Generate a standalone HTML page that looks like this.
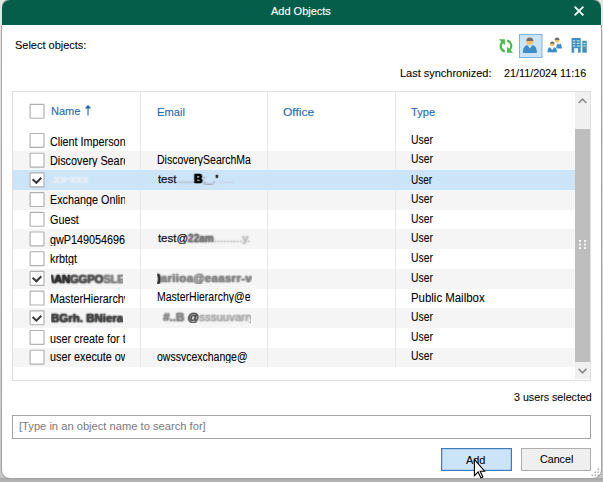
<!DOCTYPE html>
<html><head><meta charset="utf-8"><style>
*{margin:0;padding:0;box-sizing:border-box}
html,body{width:603px;height:482px;overflow:hidden;background:#ffffff;font-family:"Liberation Sans",sans-serif;font-size:12px;color:#000000}
.t,.clip{-webkit-text-stroke:0.08px currentColor}
.abs{position:absolute}
.t{position:absolute;white-space:nowrap;line-height:12px}
.sx{display:inline-block;transform-origin:0 0}
.clip{position:absolute;overflow:hidden;white-space:nowrap;line-height:12px}
.cb{position:absolute;width:15px;height:15px;border:1px solid #ababab;border-radius:1px;background:#fff}
.row{position:absolute;left:13px;width:562px}
.g{background:#f5f5f5}
.sel{background:#cce4f7}
.vsep{position:absolute;top:92px;width:1px;height:275px;background:#e6e6e6}
.bl{display:inline-block;color:transparent !important;-webkit-text-stroke:0 !important;text-shadow:0 0 var(--r,1.6px) var(--c,#000),0 0 var(--r,1.6px) var(--c,#000),0 0 var(--r,1.6px) var(--c,#000)}
body.measure .nm{visibility:hidden}
body.measure .t, body.measure .clip{color:#000 !important}
</style></head><body>
<div class="abs nm" style="left:0;top:0;width:603px;height:482px;background:linear-gradient(#e8e8e8,#c6c6c6)"></div>
<div class="abs nm" style="left:0;top:478px;width:603px;height:4px;background:linear-gradient(#a6a6a6,#b6b6b6)"></div>
<div class="abs nm" style="left:2px;top:0;width:599px;height:478px;background:#fff;border-radius:8px 8px 8px 8px;overflow:hidden;box-shadow:0 0 0 1px #a4a4a4,0 1px 0 0 #9a9a9a"><div class="abs" style="left:0;top:0;width:599px;height:25px;background:#045e4a"></div></div>
<div class="abs nm" style="left:0;top:0;width:2px;height:25px;background:#e6e6e6"></div>
<div class="abs nm" style="left:601px;top:0;width:2px;height:25px;background:#e6e6e6"></div>
<svg class="abs nm" style="left:572px;top:4px" width="14" height="14" viewBox="0 0 14 14"><path d="M2.6 2.6L11.4 11.4M11.4 2.6L2.6 11.4" stroke="#f4fffc" stroke-width="1.9"/></svg>
<svg class="abs nm" style="left:496px;top:36px" width="20" height="20" viewBox="0 0 20 20">
  <g fill="none" stroke="#4cb749" stroke-width="2.1">
  <path d="M6.2 6.2 A5.8 5.8 0 0 0 8.8 15.6"/>
  <path d="M13.8 13.8 A5.8 5.8 0 0 0 11.2 4.4"/>
  </g>
  <g fill="#4cb749">
  <path d="M2.9 3.2 L8.9 3.2 L8.9 9.2 Z"/>
  <path d="M17.1 16.8 L11.1 16.8 L11.1 10.8 Z"/>
  </g>
</svg>
<svg class="abs nm" style="left:518px;top:33px" width="25" height="25" viewBox="0 0 25 25">
  <rect x="1.5" y="1.5" width="22.5" height="23" fill="#cce4f7" stroke="#7fb2e5" stroke-width="1"/>
  <path d="M4.9 20 C4.9 14 7 12.2 9.5 12.2 L11.9 15.5 L14.3 12.2 C16.8 12.2 18.9 14 18.9 20 Z" fill="#3d8ec4"/>
  <circle cx="11.8" cy="8.2" r="3.5" fill="#f3c064"/>
  <path d="M8.3 7.9 A3.5 3.5 0 0 1 15.3 7.9 Z" fill="#6f6f6f"/>
</svg>
<svg class="abs nm" style="left:543px;top:33px" width="25" height="25" viewBox="0 0 25 25">
  <path d="M13.2 15.6 C13.2 12 14.5 10.6 15.2 10.6 L16 12 L16.9 10.6 C17.6 10.6 18.9 12 18.9 15.6 Z" fill="#3d8ec4"/>
  <circle cx="14.1" cy="7.3" r="2.4" fill="#f3c064"/>
  <path d="M11.7 7 A2.4 2.4 0 0 1 16.5 7 Z" fill="#6f6f6f"/>
  <path d="M4.1 19.7 C4.1 15.5 5.5 14 7.3 14 L9.2 16.5 L11.1 14 C12.9 14 14.3 15.5 14.3 19.7 Z" fill="#3d8ec4" stroke="#fff" stroke-width="0.7"/>
  <circle cx="9.3" cy="11" r="2.3" fill="#f3c064"/>
  <path d="M7 10.7 A2.3 2.3 0 0 1 11.6 10.7 Z" fill="#6f6f6f"/>
</svg>
<svg class="abs nm" style="left:568px;top:33px" width="25" height="25" viewBox="0 0 25 25">
  <path d="M3.6 4.9 H12.7 V19.7 H10.1 V15.3 H6.2 V19.7 H3.6 Z" fill="#3d8ec4"/>
  <rect x="14.3" y="7.8" width="4.4" height="11.9" fill="#3d8ec4"/>
  <g fill="#c5e3f7">
   <rect x="4.9" y="7.2" width="2.4" height="1.2"/><rect x="8.8" y="7.2" width="2.6" height="1.2"/>
   <rect x="4.9" y="9.8" width="2.4" height="1.2"/><rect x="8.8" y="9.8" width="2.6" height="1.2"/>
   <rect x="4.9" y="12.4" width="2.4" height="1.2"/><rect x="8.8" y="12.4" width="2.6" height="1.2"/>
   <rect x="15.3" y="9.8" width="2.3" height="1.2"/><rect x="15.3" y="12.4" width="2.3" height="1.2"/>
  </g>
</svg>

<div class="abs nm" style="left:12px;top:91px;width:579px;height:290px;border:1px solid #e0e0e0"></div>
<svg class="abs nm" style="left:28px;top:102px" width="18" height="18" viewBox="0 0 18 18"><rect x="2.1" y="2.3" width="13.9" height="13.9" rx="0.6" fill="#fff" stroke="#b0b0b0" stroke-width="1.15"/></svg>
<svg class="abs nm" style="left:84px;top:104px" width="8" height="12" viewBox="0 0 8 12"><path d="M4 3.5V11.5" stroke="#1c6aae" stroke-width="1.1"/><path d="M0.8 4.6L4 0.8L7.2 4.6Z" fill="#1c6aae"/></svg>
<div class="row g nm" style="top:150.65px;height:19.70px"></div>
<div class="row sel nm" style="top:170.35px;height:19.70px"></div>
<div class="row g nm" style="top:190.05px;height:19.70px"></div>
<div class="row g nm" style="top:229.45px;height:19.70px"></div>
<div class="row g nm" style="top:268.85px;height:19.70px"></div>
<div class="row g nm" style="top:308.25px;height:19.70px"></div>
<div class="row g nm" style="top:347.65px;height:19.70px"></div>
<div class="vsep nm" style="left:140px;top:92px;height:78.35px"></div>
<div class="vsep nm" style="left:140px;top:190.05px;height:177.30px"></div>
<div class="vsep nm" style="left:267px;top:92px;height:78.35px"></div>
<div class="vsep nm" style="left:267px;top:190.05px;height:177.30px"></div>
<div class="vsep nm" style="left:395px;top:92px;height:78.35px"></div>
<div class="vsep nm" style="left:395px;top:190.05px;height:177.30px"></div>
<svg class="abs nm" style="left:28px;top:130px" width="18" height="20" viewBox="0 0 18 20"><rect x="2.1" y="3.50" width="13.9" height="13.9" rx="0.6" fill="#fff" stroke="#b0b0b0" stroke-width="1.15"/></svg>
<svg class="abs nm" style="left:28px;top:150px" width="18" height="20" viewBox="0 0 18 20"><rect x="2.1" y="3.20" width="13.9" height="13.9" rx="0.6" fill="#fff" stroke="#b0b0b0" stroke-width="1.15"/></svg>
<svg class="abs nm" style="left:28px;top:170px" width="18" height="20" viewBox="0 0 18 20"><rect x="2.1" y="2.90" width="13.9" height="13.9" rx="0.6" fill="#fff" stroke="#b0b0b0" stroke-width="1.15"/><g transform="translate(0 0.60)"><path d="M4.6 8.6L8.4 12.2L13.3 7.2" fill="none" stroke="#383838" stroke-width="2"/></g></svg>
<svg class="abs nm" style="left:28px;top:190px" width="18" height="20" viewBox="0 0 18 20"><rect x="2.1" y="2.60" width="13.9" height="13.9" rx="0.6" fill="#fff" stroke="#b0b0b0" stroke-width="1.15"/></svg>
<svg class="abs nm" style="left:28px;top:209px" width="18" height="20" viewBox="0 0 18 20"><rect x="2.1" y="3.30" width="13.9" height="13.9" rx="0.6" fill="#fff" stroke="#b0b0b0" stroke-width="1.15"/></svg>
<svg class="abs nm" style="left:28px;top:229px" width="18" height="20" viewBox="0 0 18 20"><rect x="2.1" y="3.00" width="13.9" height="13.9" rx="0.6" fill="#fff" stroke="#b0b0b0" stroke-width="1.15"/></svg>
<svg class="abs nm" style="left:28px;top:249px" width="18" height="20" viewBox="0 0 18 20"><rect x="2.1" y="2.70" width="13.9" height="13.9" rx="0.6" fill="#fff" stroke="#b0b0b0" stroke-width="1.15"/></svg>
<svg class="abs nm" style="left:28px;top:268px" width="18" height="20" viewBox="0 0 18 20"><rect x="2.1" y="3.40" width="13.9" height="13.9" rx="0.6" fill="#fff" stroke="#b0b0b0" stroke-width="1.15"/><g transform="translate(0 1.10)"><path d="M4.6 8.6L8.4 12.2L13.3 7.2" fill="none" stroke="#383838" stroke-width="2"/></g></svg>
<svg class="abs nm" style="left:28px;top:288px" width="18" height="20" viewBox="0 0 18 20"><rect x="2.1" y="3.10" width="13.9" height="13.9" rx="0.6" fill="#fff" stroke="#b0b0b0" stroke-width="1.15"/></svg>
<svg class="abs nm" style="left:28px;top:308px" width="18" height="20" viewBox="0 0 18 20"><rect x="2.1" y="2.80" width="13.9" height="13.9" rx="0.6" fill="#fff" stroke="#b0b0b0" stroke-width="1.15"/><g transform="translate(0 0.50)"><path d="M4.6 8.6L8.4 12.2L13.3 7.2" fill="none" stroke="#383838" stroke-width="2"/></g></svg>
<svg class="abs nm" style="left:28px;top:327px" width="18" height="20" viewBox="0 0 18 20"><rect x="2.1" y="3.50" width="13.9" height="13.9" rx="0.6" fill="#fff" stroke="#b0b0b0" stroke-width="1.15"/></svg>
<svg class="abs nm" style="left:28px;top:347px" width="18" height="20" viewBox="0 0 18 20"><rect x="2.1" y="3.20" width="13.9" height="13.9" rx="0.6" fill="#fff" stroke="#b0b0b0" stroke-width="1.15"/></svg>
<div class="abs nm" style="left:12px;top:415px;width:579px;height:24px;border:1px solid #a4a4a4"></div>
<div class="abs nm" style="left:441px;top:448px;width:71px;height:23px;background:#cce4f7;border:1px solid #3e7bbd;box-shadow:inset 0 0 0 0.6px rgba(62,123,189,0.35)"></div>
<div class="abs nm" style="left:521px;top:448px;width:70px;height:23px;background:#efefef;border:1px solid #adadad"></div>
<div id="title" class="t" style="left:270.90px;top:4.89px;color:#ffffff;font-size:11.5px;-webkit-text-stroke:0.12px #fff;"><span class="sx" style="transform:scaleX(0.9549)">Add Objects</span></div>
<div id="sel" class="t" style="left:15.31px;top:39.30px;font-size:11.5px;"><span class="sx" style="transform:scaleX(0.9542)">Select objects:</span></div>
<div id="last" class="t" style="left:400.28px;top:67.43px;font-size:11.5px;"><span class="sx" style="transform:scaleX(0.9538)">Last synchronized:</span></div>
<div id="date" class="t" style="left:504.23px;top:67.43px;font-size:11.5px;"><span class="sx" style="transform:scaleX(0.9365)">21/11/2024 11:16</span></div>
<div id="cnt" class="t" style="left:513.68px;top:391.08px;font-size:11.5px;"><span class="sx" style="transform:scaleX(0.9289)">3 users selected</span></div>
<div id="ph" class="t" style="left:18.77px;top:420.31px;color:#7a7a7a;font-size:11.5px;-webkit-text-stroke:0 currentColor;"><span class="sx" style="transform:scaleX(0.9704)">[Type in an object name to search for]</span></div>
<div id="add" class="t" style="left:465.90px;top:453.59px;font-size:11.5px;"><span class="sx" style="transform:scaleX(0.9471)">Add</span></div>
<div id="cancel" class="t" style="left:539.97px;top:453.08px;font-size:11.5px;"><span class="sx" style="transform:scaleX(0.9294)">Cancel</span></div>
<div id="hname" class="t" style="left:50.62px;top:105.43px;color:#1c6aae;font-size:11.5px;-webkit-text-stroke:0.1px currentColor;"><span class="sx" style="transform:scaleX(0.9577)">Name</span></div>
<div id="hemail" class="t" style="left:156.87px;top:105.54px;color:#1c6aae;font-size:11.5px;-webkit-text-stroke:0.1px currentColor;"><span class="sx" style="transform:scaleX(0.9718)">Email</span></div>
<div id="hoffice" class="t" style="left:283.06px;top:105.55px;color:#1c6aae;font-size:11.5px;-webkit-text-stroke:0.1px currentColor;"><span class="sx" style="transform:scaleX(1.0446)">Office</span></div>
<div id="htype" class="t" style="left:410.56px;top:105.54px;color:#1c6aae;font-size:11.5px;-webkit-text-stroke:0.1px currentColor;"><span class="sx" style="transform:scaleX(0.9672)">Type</span></div>
<div id="t0" class="t" style="left:410.54px;top:134.02px;"><span class="sx" style="transform:scaleX(0.8647)">User</span></div>
<div id="t1" class="t" style="left:410.54px;top:153.43px;"><span class="sx" style="transform:scaleX(0.8647)">User</span></div>
<div id="t2" class="t" style="left:410.54px;top:173.64px;"><span class="sx" style="transform:scaleX(0.8355)">User</span></div>
<div id="t3" class="t" style="left:410.54px;top:193.25px;"><span class="sx" style="transform:scaleX(0.8647)">User</span></div>
<div id="t4" class="t" style="left:410.54px;top:212.67px;"><span class="sx" style="transform:scaleX(0.8647)">User</span></div>
<div id="t5" class="t" style="left:410.54px;top:232.17px;"><span class="sx" style="transform:scaleX(0.8647)">User</span></div>
<div id="t6" class="t" style="left:410.54px;top:252.38px;"><span class="sx" style="transform:scaleX(0.8647)">User</span></div>
<div id="t7" class="t" style="left:410.54px;top:271.90px;"><span class="sx" style="transform:scaleX(0.8647)">User</span></div>
<div id="t8" class="t" style="left:410.51px;top:291.90px;"><span class="sx" style="transform:scaleX(0.9511)">Public Mailbox</span></div>
<div id="t9" class="t" style="left:410.54px;top:311.42px;"><span class="sx" style="transform:scaleX(0.8647)">User</span></div>
<div id="t10" class="t" style="left:410.54px;top:331.03px;"><span class="sx" style="transform:scaleX(0.8647)">User</span></div>
<div id="t11" class="t" style="left:410.54px;top:350.43px;"><span class="sx" style="transform:scaleX(0.8647)">User</span></div>
<div id="n0" class="clip" style="left:50.30px;top:135.50px;width:74.70px;"><span class="sx" style="transform:scaleX(0.9000)">Client Impersonation</span></div>
<div id="n1" class="clip" style="left:50.30px;top:154.91px;width:74.70px;"><span class="sx" style="transform:scaleX(0.9000)">Discovery Search Mailbox</span></div>
<div id="e1" class="clip" style="left:157.00px;top:154.31px;width:94.00px;"><span class="sx" style="transform:scaleX(0.8750)">DiscoverySearchMailbox</span></div>
<div id="n3" class="clip" style="left:50.30px;top:194.03px;width:74.70px;"><span class="sx" style="transform:scaleX(0.9000)">Exchange Online-ApplicationAccount</span></div>
<div id="n4" class="clip" style="left:50.30px;top:213.54px;width:74.70px;"><span class="sx" style="transform:scaleX(0.9000)">Guest</span></div>
<div id="n5" class="clip" style="left:50.30px;top:233.75px;width:74.70px;"><span class="sx" style="transform:scaleX(0.9000)">gwP149054696.</span></div>
<div id="n6" class="clip" style="left:50.30px;top:253.16px;width:74.70px;"><span class="sx" style="transform:scaleX(0.9000)">krbtgt</span></div>
<div id="n8" class="clip" style="left:50.30px;top:292.78px;width:74.70px;"><span class="sx" style="transform:scaleX(0.9000)">MasterHierarchy</span></div>
<div id="e8" class="clip" style="left:157.00px;top:291.48px;width:94.00px;"><span class="sx" style="transform:scaleX(0.8750)">MasterHierarchy@exchange</span></div>
<div id="n10" class="clip" style="left:50.30px;top:332.51px;width:74.70px;"><span class="sx" style="transform:scaleX(0.9000)">user create for test</span></div>
<div id="n11" class="clip" style="left:50.30px;top:350.91px;width:74.70px;"><span class="sx" style="transform:scaleX(0.9000)">user execute owssvc</span></div>
<div id="e11" class="clip" style="left:157.00px;top:351.31px;width:94.00px;"><span class="sx" style="transform:scaleX(0.8750)">owssvcexchange@</span></div>
<div class="abs nm" style="left:51px;top:173px;line-height:12px;white-space:nowrap"><span class="bl" style="--c:#e4eef8;font-size:11px;font-weight:bold">.xx·xxx</span></div>
<div class="abs nm" style="left:157.9px;top:173.3px;font-size:11.5px;line-height:12px;white-space:nowrap;width:93px;overflow:hidden;-webkit-text-stroke:0.25px #141414;color:#141414">test<span class="bl" style="--c:#b0c0d0;letter-spacing:-1px">........</span><span class="bl" style="--c:#000;font-weight:bold;font-size:12px;--r:1.1px">B</span><span class="bl" style="--c:#9aa6b2">;_.</span><span class="bl" style="--c:#222;font-weight:bold;--r:1.1px">'</span><span class="bl" style="--c:#c4d2e0">.....</span></div>
<div class="abs nm" style="left:157.9px;top:232.4px;font-size:11.5px;line-height:12px;white-space:nowrap;width:93px;overflow:hidden;-webkit-text-stroke:0.25px #141414;color:#141414">test@<span class="bl" style="--c:#777;font-size:10px;font-weight:bold">22am</span><span class="bl" style="--c:#bbb">.........y.</span></div>
<div class="abs nm" style="left:51px;top:273px;line-height:12px;white-space:nowrap;width:72px;overflow:hidden"><span class="bl" style="--c:#2a2a2a;font-weight:bold;font-size:11.5px;letter-spacing:-0.3px">\AN</span><span class="bl" style="--c:#555;font-weight:bold;font-size:11.5px;letter-spacing:-0.3px">GGPO</span><span class="bl" style="--c:#888;font-weight:bold;font-size:11.5px;letter-spacing:-0.3px">SLE</span></div>
<div class="abs nm" style="left:157px;top:272px;line-height:12px;white-space:nowrap;width:95px;overflow:hidden"><span class="bl" style="--c:#222;font-weight:bold;font-size:11.5px">)</span><span class="bl" style="--c:#888;font-size:11.5px;font-weight:bold;letter-spacing:0.3px">ariioa@eaasrr-ve</span></div>
<div class="abs nm" style="left:51px;top:312.3px;line-height:12px;white-space:nowrap;width:72px;overflow:hidden"><span class="bl" style="--c:#444;font-weight:bold;font-size:11.5px">BGrh. BNiera</span></div>
<div class="abs nm" style="left:160px;top:311.3px;line-height:12px;white-space:nowrap;width:91px;overflow:hidden"><span class="bl" style="--c:#888;font-size:11.5px;font-weight:bold">&nbsp;#..B&nbsp;</span><span class="bl" style="--c:#444;font-size:11.5px;--r:1.1px">@</span><span class="bl" style="--c:#aaa;font-size:11.5px">sssuuvarry</span></div>

<div class="abs nm" style="left:575px;top:92px;width:15px;height:287px;background:#f0f0f0"></div>
<div class="abs nm" style="left:575px;top:129px;width:14.5px;height:233px;background:#bebebe"></div>
<svg class="abs nm" style="left:575px;top:92px" width="15" height="287" viewBox="0 0 15 287"><path d="M3.6 11L7.5 7.1L11.4 11" fill="none" stroke="#8a8a8a" stroke-width="1.6"/><path d="M3.6 276.9L7.5 280.8L11.4 276.9" fill="none" stroke="#8a8a8a" stroke-width="1.6"/><g fill="#f4f4f4"><rect x="4" y="148" width="2" height="2"/><rect x="9" y="148" width="2" height="2"/><rect x="4" y="151.5" width="2" height="2"/><rect x="9" y="151.5" width="2" height="2"/><rect x="4" y="155" width="2" height="2"/><rect x="9" y="155" width="2" height="2"/></g></svg>
<svg class="abs nm" style="left:588px;top:466px" width="13" height="12" viewBox="0 0 13 12"><g fill="#a9adbb"><rect x="9.5" y="2.5" width="1.5" height="1.5"/><rect x="6.5" y="5.5" width="1.5" height="1.5"/><rect x="9.5" y="5.5" width="1.5" height="1.5"/><rect x="3.5" y="8.5" width="1.5" height="1.5"/><rect x="6.5" y="8.5" width="1.5" height="1.5"/><rect x="9.5" y="8.5" width="1.5" height="1.5"/></g></svg>
<svg class="abs nm" style="left:473px;top:458px" width="16" height="22" viewBox="0 0 16 22"><path d="M1.4 1.4 L1.4 17.6 L5.1 14 L7.9 19.8 L9.9 18.9 L7.2 13.2 L11.6 13.2 Z" fill="#fff" stroke="#000" stroke-width="1.1" stroke-linejoin="miter"/></svg>

</body></html>
